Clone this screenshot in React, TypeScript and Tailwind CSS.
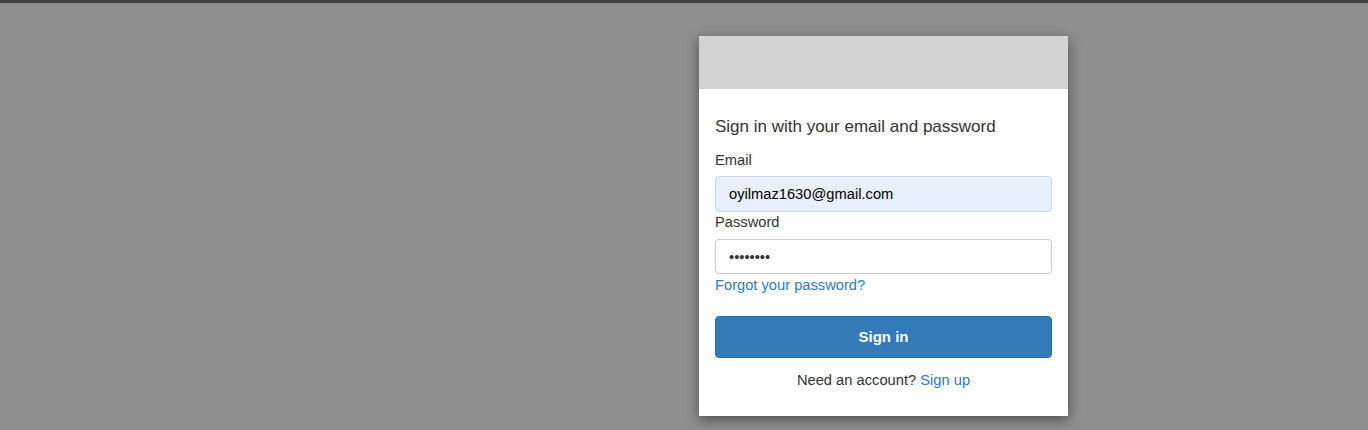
export default function App() {
  return (
    <div
      className="min-h-[430px] bg-[#8f8f8f] border-t-[3px] border-[#404040] pt-[33px]"
      style={{ fontFamily: '"Liberation Sans", Arial, sans-serif' }}
    >
      <div className="ml-[699px] w-[369px] bg-white shadow-[0_4px_12px_rgba(0,0,0,0.45)]">
        <div className="h-[53px] bg-[#d3d3d3]" />
        <div className="px-4 pt-[27px] pb-[27px]">
          <h1 className="text-[17px] leading-[22px] text-[#333]">
            Sign in with your email and password
          </h1>
          <label className="block mt-[13px] text-[14.7px] leading-[18px] text-[#333]">
            Email
          </label>
          <input
            readOnly
            value="oyilmaz1630@gmail.com"
            className="mt-[7px] block w-full h-[36px] rounded-[4px] border border-[#cfd6de] bg-[#e8f0fe] px-[13px] text-[14.7px] text-black outline-none"
          />
          <label className="block mt-0 text-[14.7px] leading-[21px] text-[#333]">
            Password
          </label>
          <input
            readOnly
            type="password"
            value="password"
            className="mt-[6px] block w-full h-[35px] rounded-[4px] border border-[#ccc] bg-white px-[13px] text-[14.7px] text-[#333] outline-none"
          />
          <a className="block mt-[2px] text-[14.7px] leading-[18px] text-[#337ab7]" href="#">
            Forgot your password?
          </a>
          <button className="mt-[22px] block w-full h-[42px] rounded-[4px] bg-[#337ab7] border border-[#2e6da4] text-white text-[15px] font-bold">
            Sign in
          </button>
          <p className="mt-[13px] text-center text-[14.7px] leading-[18px] text-[#333]">
            Need an account? <a className="text-[#337ab7]" href="#">Sign up</a>
          </p>
        </div>
      </div>
    </div>
  );
}
